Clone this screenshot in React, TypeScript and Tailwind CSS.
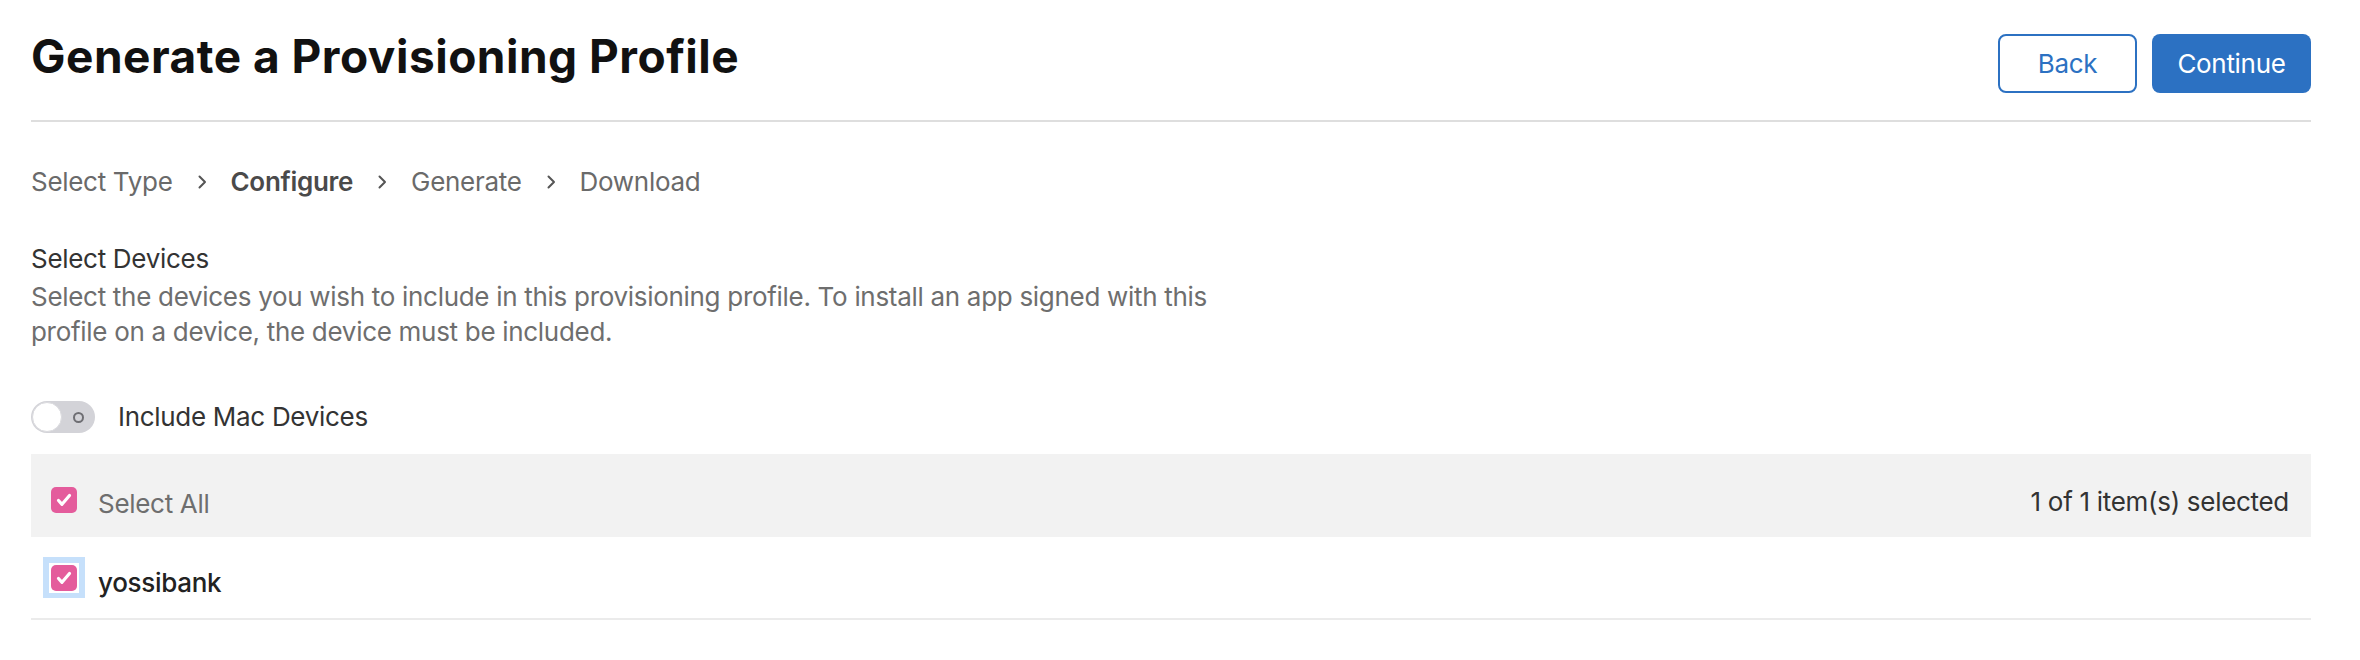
import React from 'react';

const STEPS = ['Select Type', 'Configure', 'Generate', 'Download'];
const ACTIVE_STEP = 'Configure';

function Chevron() {
  return (
    <svg width="10" height="14" viewBox="0 0 10 14" className="shrink-0">
      <path d="M2.5 1.5L8 7l-5.5 5.5" fill="none" stroke="#555" strokeWidth="2" strokeLinecap="round" strokeLinejoin="round" />
    </svg>
  );
}

function Checkbox() {
  return (
    <div className="w-[26px] h-[26px] rounded-[5px] bg-[#e45c9c] flex items-center justify-center shrink-0">
      <svg width="18" height="18" viewBox="0 0 18 18">
        <path d="M3.5 9.5l3.5 3.8L14.5 4.5" fill="none" stroke="#fff" strokeWidth="3.2" strokeLinecap="round" strokeLinejoin="round" />
      </svg>
    </div>
  );
}

function Toggle() {
  return (
    <div className="w-[64px] h-[32px] rounded-full bg-[#d3d3d8] flex items-center justify-between pl-[1px] pr-[11px] shrink-0">
      <div className="w-[30px] h-[30px] rounded-full bg-white border border-[#dadade]" />
      <div className="w-[11px] h-[11px] rounded-full border-2 border-[#6e6e73]" />
    </div>
  );
}

export default function App() {
  return (
    <div className="w-[2360px] h-[660px] bg-white font-['Inter','Liberation_Sans',sans-serif] text-[26px] leading-[32px] tracking-[-0.3px] text-[#333]">
      <div className="ml-[31px] w-[2280px]">
        <header className="h-[120px] flex items-start justify-between">
          <h1 className="mt-[30px] text-[46px] leading-[52px] font-bold text-[#111] tracking-[0.5px]">
            Generate a Provisioning Profile
          </h1>
          <div className="mt-[34px] flex gap-[15px]">
            <button
              type="button"
              className="w-[139px] h-[59px] rounded-[8px] border-2 border-[#2c71c2] text-[#2c71c2] bg-white"
            >
              Back
            </button>
            <button
              type="button"
              className="w-[159px] h-[59px] rounded-[8px] bg-[#2c71c2] text-white"
            >
              Continue
            </button>
          </div>
        </header>
        <div className="h-[2px] bg-[#dedede]" />

        <nav className="mt-[44px] flex items-center gap-[24px] text-[#6a6a6a]">
          {STEPS.map((step, i) => (
            <React.Fragment key={step}>
              {i > 0 && <Chevron />}
              <span className={step === ACTIVE_STEP ? 'font-semibold text-[#4a4a4a]' : ''}>{step}</span>
            </React.Fragment>
          ))}
        </nav>

        <section className="mt-[43px] leading-[35px]">
          <h2 className="mb-[3px] text-[#333]">Select Devices</h2>
          <p className="max-w-[1200px] text-[#6e6e6e]">
            Select the devices you wish to include in this provisioning profile. To install an app signed with this
            profile on a device, the device must be included.
          </p>
        </section>

        <div className="mt-[52px] flex items-center gap-[23px]">
          <Toggle />
          <span className="text-[#333]">Include Mac Devices</span>
        </div>

        <div className="mt-[21px]">
          <div className="h-[83px] pt-[9px] bg-[#f2f2f2] flex items-center justify-between pl-[20px] pr-[22px]">
            <div className="flex items-center gap-[21px]">
              <Checkbox />
              <span className="pt-[8px] text-[#6e6e6e]">Select All</span>
            </div>
            <span className="pt-[4px] text-[#333]">1 of 1 item(s) selected</span>
          </div>
          <div className="h-[81px] flex items-center pl-[12px] border-b-2 border-[#ebebeb] box-content">
            <div className="w-[42px] h-[41px] bg-[#c6e0fb] flex items-center justify-center">
              <div className="w-[30px] h-[30px] bg-white flex items-center justify-center">
                <Checkbox />
              </div>
            </div>
            <span className="ml-[13px] pt-[10px] font-medium text-[#222]">yossibank</span>
          </div>
        </div>
      </div>
    </div>
  );
}
